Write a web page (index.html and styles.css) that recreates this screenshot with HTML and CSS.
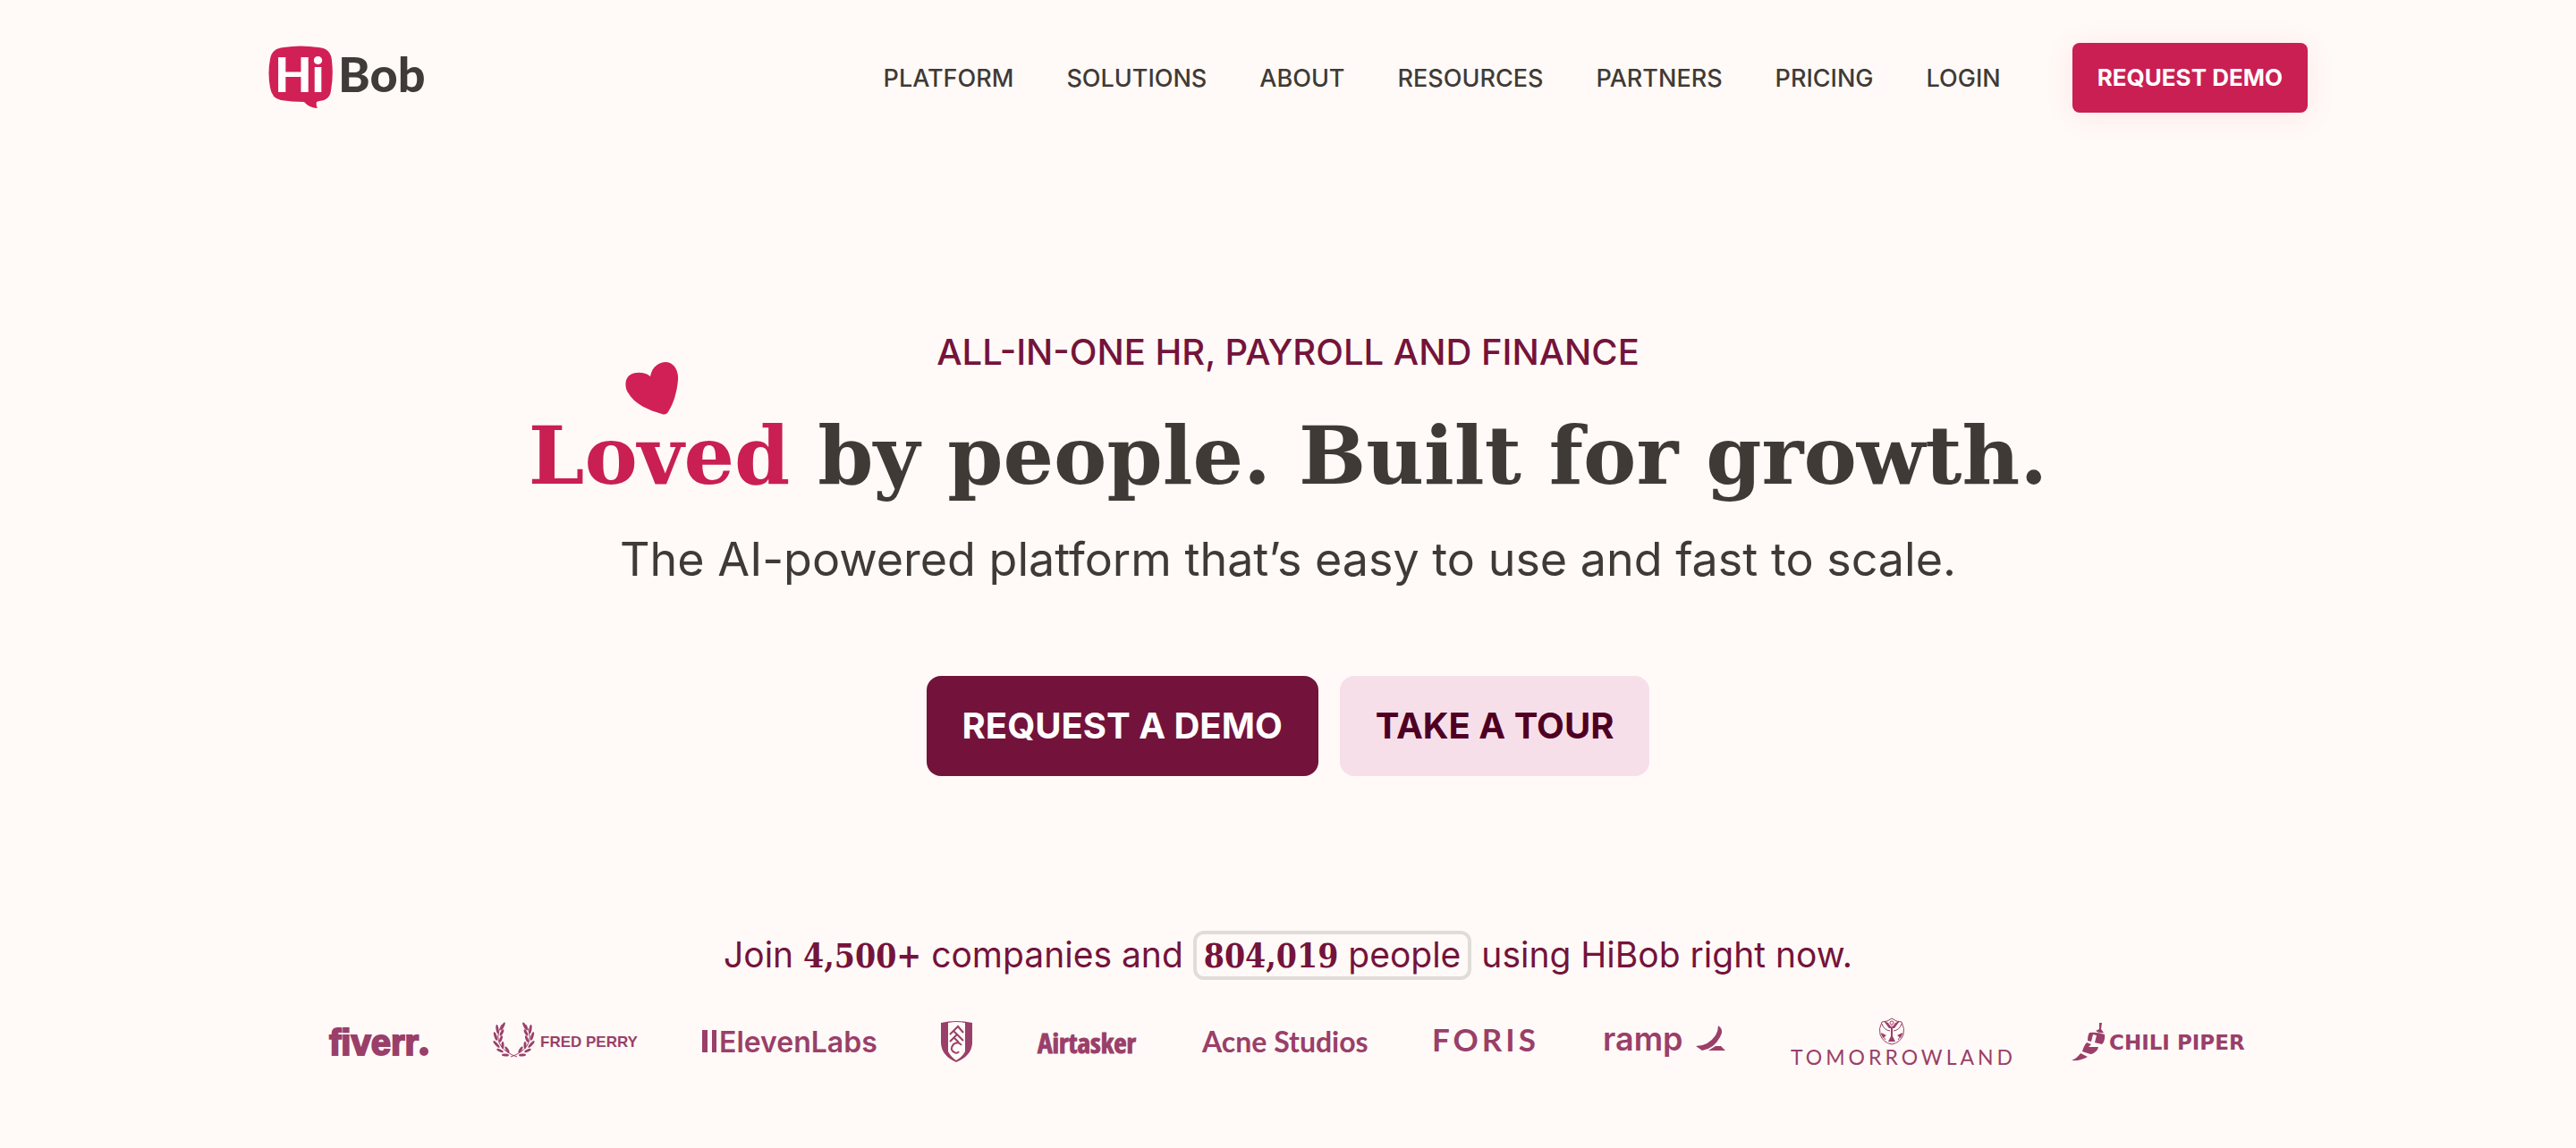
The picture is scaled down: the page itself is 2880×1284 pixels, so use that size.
FILE: index.html
```
<!DOCTYPE html>
<html lang="en">
<head>
  <meta charset="UTF-8" />
  <meta name="viewport" content="width=device-width, initial-scale=1" />
  <title>HiBob</title>
  <link rel="stylesheet" href="styles.css">
</head>
<body>
  <header class="site-header">
    <a class="brand" href="#" aria-label="HiBob">
      <svg width="176" height="72" viewBox="0 0 176 72">
        <path fill="#d12055" d="M17 2Q36-1 56 2Q70 3 71 17Q73 34 70 50Q69 61 57 62L54 63Q53 67 55 70Q46 70 40 63Q26 63 14 61Q4 59 2 47Q-1 31 2 15Q4 3 17 2Z" />
        <text class="brand-text" x="7" y="52" fill="#fff">Hi</text>
        <text class="brand-text" x="78" y="52" fill="#403a38">Bob</text>
      </svg>
    </a>
    <nav class="main-nav">
      <a href="#">PLATFORM</a>
      <a href="#">SOLUTIONS</a>
      <a href="#">ABOUT</a>
      <a href="#">RESOURCES</a>
      <a href="#">PARTNERS</a>
      <a href="#">PRICING</a>
      <a href="#">LOGIN</a>
    </nav>
    <a class="header-cta" href="#">REQUEST DEMO</a>
  </header>

  <main>
    <section class="hero">
      <p class="eyebrow">ALL-IN-ONE HR, PAYROLL AND FINANCE</p>
      <h1>
        <span class="loved">Loved<svg class="heart" width="60" height="60" viewBox="0 0 60 60"><path fill="#d12055" d="M28 16C30 5 38 0 45 0C54 0 60 9 59 20C58 33 54 46 49 54Q46 60 41 58C27 54 10 47 3 34C-2 26 0 13 12 12Q22 11 28 16Z" /></svg></span>
        by people. Built for growth.
      </h1>
      <p class="lead">The AI-powered platform that’s easy to use and fast to scale.</p>
      <div class="actions">
        <a class="btn btn-dark" href="#">REQUEST A DEMO</a>
        <a class="btn btn-light" href="#">TAKE A TOUR</a>
      </div>
    </section>

    <section class="customers">
      <p class="join">Join <b>4,500+</b> companies and <span class="counter"><b>804,019</b> people</span> using HiBob right now.</p>
      <ul class="logos">
        <li>
          <svg width="111" height="60" viewBox="0 0 111 60">
            <text class="fiverr" x="0" y="43">fiverr</text>
            <circle cx="106" cy="39" r="5" />
          </svg>
        </li>
        <li>
          <svg width="160" height="60" viewBox="0 0 160 60">
            <defs>
              <g id="leaves">
                <ellipse cx="10" cy="11" rx="1.5" ry="5" transform="rotate(28 10 11)" />
                <ellipse cx="4" cy="14" rx="1.5" ry="5" transform="rotate(-8 4 14)" />
                <ellipse cx="9" cy="18" rx="1.5" ry="4" transform="rotate(28 9 18)" />
                <ellipse cx="2" cy="22" rx="1.5" ry="5" transform="rotate(-18 2 22)" />
                <ellipse cx="8" cy="25" rx="1.5" ry="4" transform="rotate(20 8 25)" />
                <ellipse cx="3" cy="31" rx="1.5" ry="5" transform="rotate(-42 3 31)" />
                <ellipse cx="10" cy="32" rx="1.5" ry="4" transform="rotate(0 10 32)" />
                <ellipse cx="7" cy="38" rx="1.5" ry="4" transform="rotate(-65 7 38)" />
                <ellipse cx="15" cy="37" rx="1.5" ry="4" transform="rotate(-32 15 37)" />
                <ellipse cx="13" cy="43" rx="1.5" ry="4" transform="rotate(-88 13 43)" />
                <path d="M9 9Q1 23 8 33Q14 41 26 45" fill="none" stroke="#9a3f69" stroke-width="1" />
              </g>
            </defs>
            <use href="#leaves" />
            <use href="#leaves" transform="translate(45 0) scale(-1 1)" />
            <text class="perry" x="52" y="34">FRED PERRY</text>
          </svg>
        </li>
        <li>
          <svg width="194" height="60" viewBox="0 0 194 60">
            <path d="M0 15h6v25H0zM11 15h5v25h-5z" />
            <text class="eleven" x="19" y="40">ElevenLabs</text>
          </svg>
        </li>
        <li>
          <svg width="35" height="60" viewBox="0 0 35 60">
            <path d="M0 7Q17 3 35 7V30Q34 44 17 51Q1 44 0 30ZM8 7V39Q11 45 17 49Q24 45 27 39V7Q17 5 8 7Z" fill-rule="evenodd" />
            <path d="M10 20L19 11L25 18M14 16L22 24M10 28L18 20L25 27M15 24L20 29M23 32Q19 27 14 31Q9 37 15 40Q18 42 20 39" fill="none" stroke="#9a3f69" stroke-width="2" />
          </svg>
        </li>
        <li>
          <svg width="111" height="60" viewBox="0 0 111 60">
            <text class="airtasker" x="0" y="41">Airtasker</text>
          </svg>
        </li>
        <li>
          <svg width="186" height="60" viewBox="0 0 186 60">
            <text class="acne" x="0" y="40">Acne Studios</text>
          </svg>
        </li>
        <li>
          <svg width="118" height="60" viewBox="0 0 118 60">
            <text class="foris" x="-2" y="39">FORIS</text>
          </svg>
        </li>
        <li>
          <svg width="135" height="60" viewBox="0 0 135 60">
            <text class="ramp" x="-2" y="38">ramp</text>
            <path d="M127 10Q134 15 129 23Q122 36 109 38L102 33Q116 33 124 21Q127 16 127 10ZM124 33H130L135 38H116Z" />
          </svg>
        </li>
        <li>
          <svg width="241" height="60" viewBox="0 0 241 60">
            <g fill="none" stroke="#9a3f69" stroke-width="1">
              <path d="M113 2L118 5L124 6Q128 14 126 20Q123 29 113 31Q103 29 100 20Q98 14 102 6L108 5ZM102 8Q104 15 111 16M124 8Q122 15 115 16M105 5L110 11H116L121 5M101 19L106 26M125 19L120 26" />
              <path d="M113 12V28" stroke-width="2" />
              <circle cx="113" cy="7" r="2" />
            </g>
            <path d="M109 28L113 20L117 28ZM101 18L107 21L103 24ZM125 18L119 21L123 24ZM104 5L109 7L113 13L117 7L122 5L116 13H110Z" />
            <text class="tomorrow" x="0" y="54">TOMORROWLAND</text>
          </svg>
        </li>
        <li>
          <svg width="197" height="60" viewBox="0 0 197 60">
            <path d="M31 7H34L33 14L36 18Q31 19 27 16L31 14ZM20 18Q28 17 37 20Q38 27 34 31L26 29L28 21L24 20L22 28L18 27Q18 21 20 18ZM17 29L22 31L19 34L30 34L29 37Q25 42 21 42L12 39Q14 32 17 29ZM10 41L18 45Q10 50 0 49Q7 46 10 41Z" />
            <text class="chili" x="42" y="37">CHILI PIPER</text>
          </svg>
        </li>
      </ul>
    </section>
  </main>
</body>
</html>
```
FILE: styles.css
```
* { box-sizing: border-box; }
body { font-family: Inter, "Open Sans", sans-serif; margin: 0; background-color: #fffaf7; color: #403a36; }
a { color: inherit; text-decoration: none; }
p, h1, ul { margin: 0; padding: 0; }

.site-header {
  display: flex; align-items: center;
  max-width: 2328px; margin: 0 auto; padding: 48px 24px 0;
}
.brand { margin-right: auto; }
.brand svg { display: block; }
.brand-text { font-family: Lato, sans-serif; font-size: 54px; font-weight: 900; }
.main-nav { display: flex; gap: 59px; font-size: 27px; font-weight: 500; }
.header-cta {
  margin-left: 80px; padding: 0 28px; line-height: 78px;
  background-color: #c91f53; color: white; border-radius: 8px;
  font-size: 26px; font-weight: 700; box-shadow: 0 4px 32px #ffe6e8;
}

.hero { display: flex; flex-direction: column; align-items: center; padding: 244px 24px 0; text-align: center; }
.eyebrow { color: #75133b; font-size: 40px; font-weight: 500; line-height: 48px; }
h1 {
  font-family: "DejaVu Serif", serif;
  font-size: 89px; font-weight: bold; line-height: 120px; margin-top: 32px;
}
.loved { position: relative; color: #c91f53; }
.heart { position: absolute; left: 108px; top: -52px; }
.lead { font-size: 52px; line-height: 60px; margin-top: 26px; }
.actions { display: flex; gap: 24px; margin-top: 100px; }
.btn { padding: 0 40px; line-height: 112px; border-radius: 16px; font-size: 40px; font-weight: 700; }
.btn-dark { background-color: #73133b; color: white; }
.btn-light { background-color: #f7dfea; color: #4f0022; }

.customers { padding: 172px 24px 0; }
.join { color: #75133b; font-size: 39px; line-height: 56px; text-align: center; }
.join b { font-family: "DejaVu Serif Condensed", "DejaVu Serif", serif; font-size: 37px; }
.counter { display: inline-block; line-height: 46px; padding: 0 8px; border: 4px solid #e0dcd8; border-radius: 12px; }
.logos { display: flex; justify-content: center; gap: 73px; list-style: none; margin-top: 40px; }
.logos svg { display: block; fill: #9a3f69; overflow: visible; }
.fiverr { font-family: "Liberation Sans", sans-serif; font-size: 40px; font-weight: bold; stroke: #9a3f69; stroke-width: 2px; }
.perry { font-family: "Liberation Sans", sans-serif; font-size: 17px; font-weight: bold; }
.eleven { font-size: 32px; font-weight: 600; }
.airtasker { font-family: "Liberation Sans Narrow", "Open Sans Condensed", "Roboto Condensed", Roboto, sans-serif; font-size: 31px; font-weight: bold; stroke: #9a3f69; stroke-width: 1px; }
.acne { font-family: Lato, sans-serif; font-size: 32px; font-weight: 700; }
.foris { font-family: Lato, sans-serif; font-size: 35px; font-weight: 700; letter-spacing: 4px; }
.ramp { font-size: 36px; font-weight: 600; }
.tomorrow { font-family: Lato, sans-serif; font-size: 23px; letter-spacing: 4px; }
.chili { font-family: "DejaVu Sans", sans-serif; font-size: 23px; font-weight: bold; }
```
